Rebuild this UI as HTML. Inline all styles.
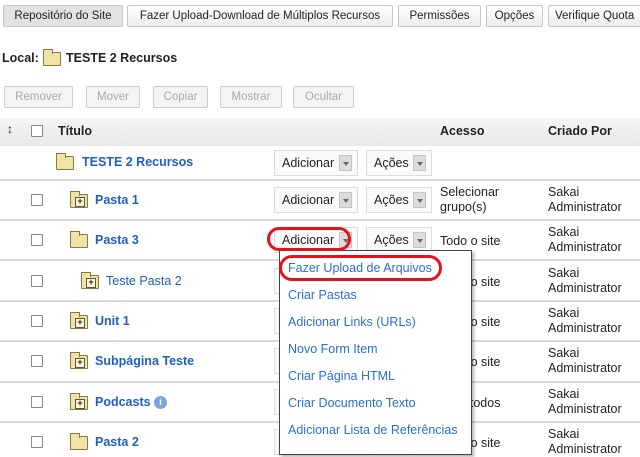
<!DOCTYPE html>
<html><head><meta charset="utf-8"><style>
*{margin:0;padding:0;box-sizing:border-box}
body{width:640px;height:457px;overflow:hidden;background:#fff;font-family:"Liberation Sans",Arial,sans-serif;font-size:12px;color:#222;position:relative}
.a{position:absolute;white-space:nowrap}
.tb{position:absolute;top:5px;height:22px;border:1px solid #c8c8c8;border-radius:2px;background:linear-gradient(#fff,#ececec);font-size:11.5px;line-height:20px;text-align:center;color:#222}
.db{position:absolute;top:86px;height:22px;border:1px solid #ccc;border-radius:2px;background:#f4f4f4;color:#aaa;font-size:11.5px;line-height:20px;text-align:center}
.sep{position:absolute;left:0;width:640px;height:2px;background:#d8d8d8}
.cb{position:absolute;left:31px;width:12px;height:12px;border:1px solid #888;background:#fff;border-radius:1px}
.lk{position:absolute;color:#1f5fbf;font-weight:bold;font-size:12.5px;white-space:nowrap}
.bt{position:absolute;height:26px;border:1px solid #ddd;background:#fafafa;font-size:12.5px;line-height:24px;padding-left:7px;color:#222}
.bt i{position:absolute;right:5px;top:4px;width:13px;height:16px;background:#ddd;border:1px solid #c4c4c4}
.bt i:after{content:"";position:absolute;left:3px;top:6px;border:3px solid transparent;border-top:4px solid #666}
.tx{position:absolute;font-size:12.5px;line-height:15px;color:#222}
.fold{position:absolute;width:18px;height:14px;background:#efe3a6;border:1px solid #8a7a40;border-radius:1px}
.fold:before{content:"";position:absolute;left:-1px;top:-4px;width:8px;height:4px;background:#efe3a6;border:1px solid #8a7a40;border-bottom:none}
.fold.p:after{content:"+";position:absolute;left:4px;top:2px;width:8px;height:8px;border:1px solid #555;font-size:9px;line-height:7px;text-align:center;font-weight:bold;background:#fff8d0}
.mi{position:absolute;left:288px;color:#2a6fd6;font-size:12.5px;white-space:nowrap}
</style></head><body>
<div class="tb" style="left:3px;width:120px;background:#e2e2e2">Repositório do Site</div>
<div class="tb" style="left:127px;width:266px">Fazer Upload-Download de Múltiplos Recursos</div>
<div class="tb" style="left:398px;width:83px">Permissões</div>
<div class="tb" style="left:486px;width:57px">Opções</div>
<div class="tb" style="left:548px;width:100px;text-align:left;padding-left:6px">Verifique Quota</div>

<div class="a" style="left:2px;top:51px;font-size:12.5px;font-weight:bold">Local:</div>
<div class="fold" style="left:43px;top:52px"></div>
<div class="a" style="left:66px;top:51px;font-size:12.5px;font-weight:bold">TESTE 2 Recursos</div>

<div class="db" style="left:4px;width:69px">Remover</div>
<div class="db" style="left:86px;width:54px">Mover</div>
<div class="db" style="left:153px;width:55px">Copiar</div>
<div class="db" style="left:220px;width:62px">Mostrar</div>
<div class="db" style="left:293px;width:61px">Ocultar</div>

<div class="a" style="left:0;top:118px;width:640px;height:28px;background:linear-gradient(#f6f6f6,#e8e8e8)"></div>
<div class="a" style="left:7px;top:122px;font-size:12px">&#8597;</div>
<div class="cb" style="top:125px"></div>
<div class="a" style="left:58px;top:124px;font-weight:bold;font-size:12.5px">Título</div>
<div class="a" style="left:440px;top:124px;font-weight:bold;font-size:12.5px">Acesso</div>
<div class="a" style="left:548px;top:124px;font-weight:bold;font-size:12.5px">Criado Por</div>

<div class="sep" style="top:179px"></div><div class="sep" style="top:219px"></div><div class="sep" style="top:259px"></div><div class="sep" style="top:300px"></div><div class="sep" style="top:340px"></div><div class="sep" style="top:381px"></div><div class="sep" style="top:421px"></div>

<div class="fold" style="left:56px;top:156px"></div>
<div class="lk" style="left:82px;top:155px">TESTE 2 Recursos</div>
<div class="bt" style="left:274px;top:150px;width:84px">Adicionar<i></i></div>
<div class="bt" style="left:366px;top:150px;width:66px">Ações<i></i></div>

<div class="cb" style="top:194px"></div>
<div class="fold p" style="left:70px;top:194px"></div>
<div class="lk" style="left:95px;top:193px">Pasta 1</div>
<div class="bt" style="left:274px;top:187px;width:84px">Adicionar<i></i></div>
<div class="bt" style="left:366px;top:187px;width:66px">Ações<i></i></div>
<div class="tx" style="left:440px;top:185px">Selecionar<br>grupo(s)</div>
<div class="tx" style="left:548px;top:185px">Sakai<br>Administrator</div>

<div class="cb" style="top:234px"></div>
<div class="fold" style="left:70px;top:234px"></div>
<div class="lk" style="left:95px;top:233px">Pasta 3</div>
<div class="bt" style="left:274px;top:227px;width:84px">Adicionar<i></i></div>
<div class="bt" style="left:366px;top:227px;width:66px">Ações<i></i></div>
<div class="tx" style="left:440px;top:234px">Todo o site</div>
<div class="tx" style="left:548px;top:225px">Sakai<br>Administrator</div>

<div class="cb" style="top:275px"></div>
<div class="fold p" style="left:81px;top:275px"></div>
<div class="lk" style="left:106px;top:274px;font-weight:normal">Teste Pasta 2</div>
<div class="tx" style="left:440px;top:275px">Todo o site</div>
<div class="tx" style="left:548px;top:266px">Sakai<br>Administrator</div>

<div class="cb" style="top:315px"></div>
<div class="fold p" style="left:70px;top:315px"></div>
<div class="lk" style="left:95px;top:314px">Unit 1</div>
<div class="tx" style="left:440px;top:315px">Todo o site</div>
<div class="tx" style="left:548px;top:306px">Sakai<br>Administrator</div>

<div class="cb" style="top:355px"></div>
<div class="fold p" style="left:70px;top:355px"></div>
<div class="lk" style="left:95px;top:354px">Subpágina Teste</div>
<div class="tx" style="left:440px;top:355px">Todo o site</div>
<div class="tx" style="left:548px;top:346px">Sakai<br>Administrator</div>

<div class="cb" style="top:396px"></div>
<div class="fold p" style="left:70px;top:396px"></div>
<div class="lk" style="left:95px;top:395px">Podcasts</div>
<div class="a" style="left:154px;top:396px;width:13px;height:13px;border-radius:50%;background:#7aa6e0;color:#fff;font-size:9px;text-align:center;line-height:13px;font-weight:bold">i</div>
<div class="tx" style="left:440px;top:396px">Para todos</div>
<div class="tx" style="left:548px;top:387px">Sakai<br>Administrator</div>

<div class="cb" style="top:436px"></div>
<div class="fold" style="left:70px;top:436px"></div>
<div class="lk" style="left:95px;top:435px">Pasta 2</div>
<div class="tx" style="left:440px;top:436px">Todo o site</div>
<div class="tx" style="left:548px;top:427px">Sakai<br>Administrator</div>

<div class="bt" style="left:274px;top:268px;width:84px;height:26px"></div>
<div class="bt" style="left:274px;top:308px;width:84px;height:26px"></div>
<div class="bt" style="left:274px;top:348px;width:84px;height:26px"></div>
<div class="bt" style="left:274px;top:389px;width:84px;height:26px"></div>
<div class="bt" style="left:274px;top:429px;width:84px;height:26px"></div>

<div class="a" style="left:279px;top:250px;width:193px;height:205px;background:#fff;border:1px solid #444;box-shadow:2px 2px 3px rgba(0,0,0,.3)"></div>
<div class="mi" style="top:261px">Fazer Upload de Arquivos</div>
<div class="mi" style="top:288px">Criar Pastas</div>
<div class="mi" style="top:315px">Adicionar Links (URLs)</div>
<div class="mi" style="top:342px">Novo Form Item</div>
<div class="mi" style="top:369px">Criar Página HTML</div>
<div class="mi" style="top:396px">Criar Documento Texto</div>
<div class="mi" style="top:423px">Adicionar Lista de Referências</div>

<div class="a" style="left:267px;top:227px;width:84px;height:24px;border:3px solid #e8101a;border-radius:12px"></div>
<div class="a" style="left:279px;top:255px;width:163px;height:26px;border:3px solid #e8101a;border-radius:13px"></div>
</body></html>
